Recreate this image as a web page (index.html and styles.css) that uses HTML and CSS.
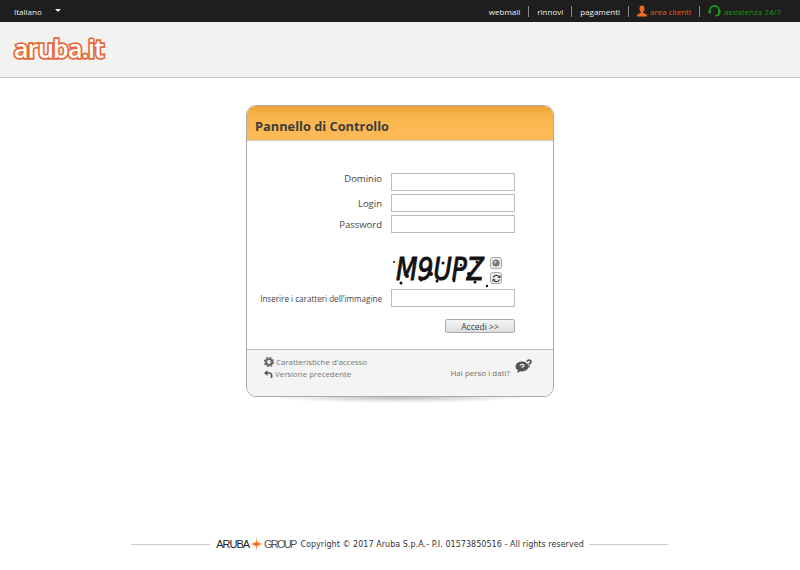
FILE: index.html
```html
<!DOCTYPE html>
<html lang="it">
<head>
  <meta charset="UTF-8">
  <title>Pannello di Controllo</title>
  <link rel="stylesheet" href="styles.css">
</head>
<body>
  <div class="topbar">
    <div class="lingua">Italiano <span class="freccia"></span></div>
    <ul class="menu">
      <li>webmail</li>
      <li>rinnovi</li>
      <li>pagamenti</li>
      <li class="area">
        <svg width="10" height="12" viewBox="0 0 12 13"><path fill="#f26a21" d="M6 0c2 0 3 1.500 3 3.500S8 7 7.500 7.500V8.500L12 11v2H0V11l4.500-2.500v-1C4 7 3 5.500 3 3.500S4 0 6 0z"/></svg>
        area clienti
      </li>
      <li class="assistenza">
        <svg width="13" height="13" viewBox="0 0 14 14"><path fill="none" stroke="#1aa01a" stroke-width="1.800" d="M2 8V6a5 5 0 0 1 10 0v2c0 2-1.500 3.500-4 3.500"/><rect x="0.500" y="5.500" width="2.500" height="3.500" fill="#1aa01a"/><rect x="11" y="5.500" width="2.500" height="3.500" fill="#1aa01a"/></svg>
        assistenza 24/7
      </li>
    </ul>
  </div>

  <header class="testata">
    <div class="logo">aruba.it</div>
  </header>

  <main class="pannello">
    <h1 class="pannello-titolo">Pannello di Controllo</h1>
    <form class="modulo">
      <label class="riga-dominio">Dominio</label>
      <input type="text">
      <label>Login</label>
      <input type="text">
      <label>Password</label>
      <input type="text">

      <div class="captcha">
        <svg class="captcha-img" width="98" height="38" viewBox="0 0 98 38">
          <text class="captcha-testo" x="5" y="30" textLength="88" lengthAdjust="spacingAndGlyphs">M9UPZ</text>
          <g fill="#111">
            <circle cx="3" cy="12" r="1"/><circle cx="10" cy="33" r="1.500"/><circle cx="16" cy="26" r="2"/>
            <circle cx="30" cy="30" r="1.500"/><circle cx="40" cy="24" r="2"/><circle cx="52" cy="13" r="1.500"/>
            <circle cx="63" cy="31" r="1.300"/><circle cx="78" cy="24" r="2"/><circle cx="86" cy="12" r="1.500"/>
            <circle cx="96" cy="36" r="1.200"/><circle cx="84" cy="32" r="1.500"/><circle cx="22" cy="8" r="1.500"/>
            <circle cx="46" cy="31" r="1.500"/><circle cx="70" cy="15" r="1.200"/>
          </g>
        </svg>
        <div class="captcha-tasti">
          <span class="tasto"><svg width="8" height="8" viewBox="0 0 10 10"><circle cx="5" cy="5" r="4.500" fill="#777"/><circle cx="4" cy="4" r="1.500" fill="#ccc"/></svg></span>
          <span class="tasto"><svg width="9" height="9" viewBox="0 0 10 10"><path fill="none" stroke="#444" stroke-width="1.500" d="M1.500 4A3.700 3.700 0 0 1 8 3M8.500 6A3.700 3.700 0 0 1 2 7"/><path fill="#444" d="M9.500 1v3.500H6zM.5 9V5.500H4z"/></svg></span>
        </div>
      </div>

      <label class="etichetta-piccola">Inserire i caratteri dell'immagine</label>
      <input type="text">
      <button type="button" class="accedi">Accedi &gt;&gt;</button>
    </form>

    <div class="pannello-piede">
      <ul class="link">
        <li>
          <svg width="10" height="10" viewBox="0 0 10 10"><circle cx="5" cy="5" r="3" fill="none" stroke="#666" stroke-width="2.200"/><circle cx="5" cy="5" r="4.700" fill="none" stroke="#666" stroke-width="1.200" stroke-dasharray="1.800 1.900"/></svg>
          Caratteristiche d'accesso
        </li>
        <li class="versione">
          <svg width="9" height="9" viewBox="0 0 9 9"><path fill="none" stroke="#555" stroke-width="1.600" d="M3 3h2.500C7.500 3 8 5 7.500 8"/><path fill="#555" d="M0 3l3.500-3v6z"/></svg>
          Versione precedente
        </li>
      </ul>
      <div class="persi">
        <span class="persi-testo">Hai perso i dati?</span>
        <svg width="18" height="14" viewBox="0 0 18 14"><ellipse cx="7" cy="7.500" rx="6.500" ry="5" fill="#555"/><path fill="#555" d="M3 11l-1 3 4-2z"/><path fill="none" stroke="#eee" stroke-width="1.300" d="M5 6.500c.5-1.500 4-1.500 4 .2 0 1-2 1-2 2"/><path fill="none" stroke="#555" stroke-width="1.700" d="M12 2.500c1-2 4-1.500 4 .2 0 1.500-2 1.500-2 3"/><circle cx="14" cy="7.500" r="1" fill="#555"/></svg>
      </div>
    </div>
  </main>
  <div class="ombra"></div>

  <footer class="piede">
    <span class="filetto"></span>
    <span class="gruppo">
      <span class="gruppo-aruba">ARUBA</span>
      <svg width="13" height="16" viewBox="0 0 16 16"><path fill="#f26a21" d="M8 0l.7 6.500L16 8l-7.300 1.500L8 16l-.7-6.500L0 8l7.300-1.500z"/><path fill="#f26a21" d="M4 4l3.700 3L12 4 9 7.800 12 12 8.200 9.300 4 12l2.800-4z"/></svg>
      <span class="gruppo-group">GROUP</span>
    </span>
    <span class="copyright">Copyright © 2017 Aruba S.p.A.- P.I. 01573850516 - All rights reserved</span>
    <span class="filetto"></span>
  </footer>
</body>
</html>
```

FILE: styles.css
```css
body {
  margin: 0;
  background: #fff;
  color: #444;
  font-family: "Open Sans", sans-serif;
}
svg {
  display: block;
}
ul {
  list-style: none;
  margin: 0;
  padding: 0;
}
.topbar {
  display: flex;
  justify-content: space-between;
  align-items: center;
  height: 22px;
  padding: 0 19px 0 14px;
  background: #1e1e1e;
  color: #eee;
  font-size: 8px;
}
.lingua {
  display: flex;
  align-items: center;
  gap: 13px;
}
.freccia {
  width: 0;
  height: 0;
  margin-top: -2px;
  border-left: 3px solid transparent;
  border-right: 3px solid transparent;
  border-top: 3px solid #eee;
}
.menu {
  display: flex;
  align-items: center;
}
.menu li {
  display: flex;
  align-items: center;
  gap: 3px;
  height: 11px;
  padding: 0 8px;
  border-left: 1px solid #888;
}
.menu li:first-child {
  border-left: none;
}
.menu li:last-child {
  padding-right: 0;
}
.menu .area {
  color: #ee5f1e;
}
.menu .assistenza {
  color: #149a14;
}
.testata {
  height: 55px;
  padding-left: 14px;
  background: #f2f2f1;
  border-bottom: 1px solid #ccc;
}
.logo {
  padding-top: 10px;
  font-size: 25px;
  line-height: 32px;
  font-weight: 600;
  letter-spacing: -0.7px;
  color: #fff;
  -webkit-text-stroke: 3.500px #e8683a;
  paint-order: stroke fill;
}
.pannello {
  width: 306px;
  margin: 27px 0 0 246px;
  border: 1px solid #aaa;
  border-radius: 10px;
  overflow: hidden;
  background: #fff;
}
.pannello-titolo {
  height: 34px;
  margin: 0;
  padding-left: 8px;
  background: linear-gradient(#f0a232 0, #f8b44c 30%, #ffbb58 100%);
  border-bottom: 1px solid #ccc;
  color: #3c3c3c;
  font-size: 12.800px;
  line-height: 40px;
  font-weight: 700;
}
.modulo {
  display: grid;
  grid-template-columns: 135px 124px;
  column-gap: 9px;
  row-gap: 3px;
  align-items: center;
  height: 208px;
  align-content: start;
  padding-top: 32px;
  box-sizing: border-box;
  font-size: 9.500px;
}
.modulo label {
  text-align: right;
}
.modulo .riga-dominio {
  margin-top: -8px;
}
.modulo input {
  box-sizing: border-box;
  width: 124px;
  height: 18px;
  margin: 0;
  padding: 0;
  background: #fff;
  border: 1px solid #bbb;
}
.modulo .etichetta-piccola {
  font-size: 8.100px;
}
.captcha {
  grid-column: 2;
  display: flex;
  gap: 1px;
  margin: 14px 0 -2px;
  height: 38px;
}
.captcha-img {
  overflow: visible;
}
.captcha-testo {
  font-family: "DejaVu Sans", sans-serif;
  font-size: 32px;
  font-style: italic;
  fill: #111;
  stroke: #111;
  stroke-width: 1px;
}
.captcha-tasti {
  display: flex;
  flex-direction: column;
  gap: 3px;
  margin-top: 7px;
}
.tasto {
  box-sizing: border-box;
  display: flex;
  align-items: center;
  justify-content: center;
  width: 12px;
  height: 12px;
  border: 1px solid #aaa;
  border-radius: 3px;
  background: #eee;
}
.accedi {
  grid-column: 2;
  justify-self: end;
  width: 70px;
  height: 14px;
  margin-top: 9px;
  padding: 0;
  background: linear-gradient(#f6f6f6, #dedede);
  border: 1px solid #aaa;
  border-radius: 2px;
  color: #444;
  font-family: "Open Sans", sans-serif;
  font-size: 8.500px;
}
.pannello-piede {
  display: flex;
  justify-content: space-between;
  height: 47px;
  padding: 6px 20px 0 17px;
  box-sizing: border-box;
  background: #f4f4f4;
  border-top: 1px solid #bbb;
  color: #777;
  font-size: 7.900px;
}
.link li {
  display: flex;
  align-items: center;
  gap: 2px;
  height: 12px;
}
.persi {
  display: flex;
  align-items: flex-start;
  gap: 5px;
  padding-top: 3px;
  color: #7a6f62;
}
.persi-testo {
  padding-top: 6px;
  line-height: 16px;
  font-size: 8px;
}
.ombra {
  width: 260px;
  height: 6px;
  margin: 0 0 0 269px;
  background: radial-gradient(ellipse at top, #bbb, transparent 70%);
}
.piede {
  display: flex;
  align-items: center;
  justify-content: center;
  gap: 5px;
  margin-top: 133px;
  padding-right: 1px;
  font-family: "DejaVu Sans", sans-serif;
  font-size: 8px;
  color: #333;
}
.filetto {
  width: 79px;
  height: 1px;
  background: #ccc;
}
.gruppo {
  display: flex;
  align-items: center;
  gap: 1px;
  margin-left: 1px;
  font-family: "Liberation Sans", sans-serif;
  font-size: 11px;
  color: #222;
}
.gruppo-aruba {
  letter-spacing: -1px;
}
.gruppo-group {
  letter-spacing: -1.800px;
  color: #555;
}
.copyright {
  letter-spacing: 0.04px;
}
```
